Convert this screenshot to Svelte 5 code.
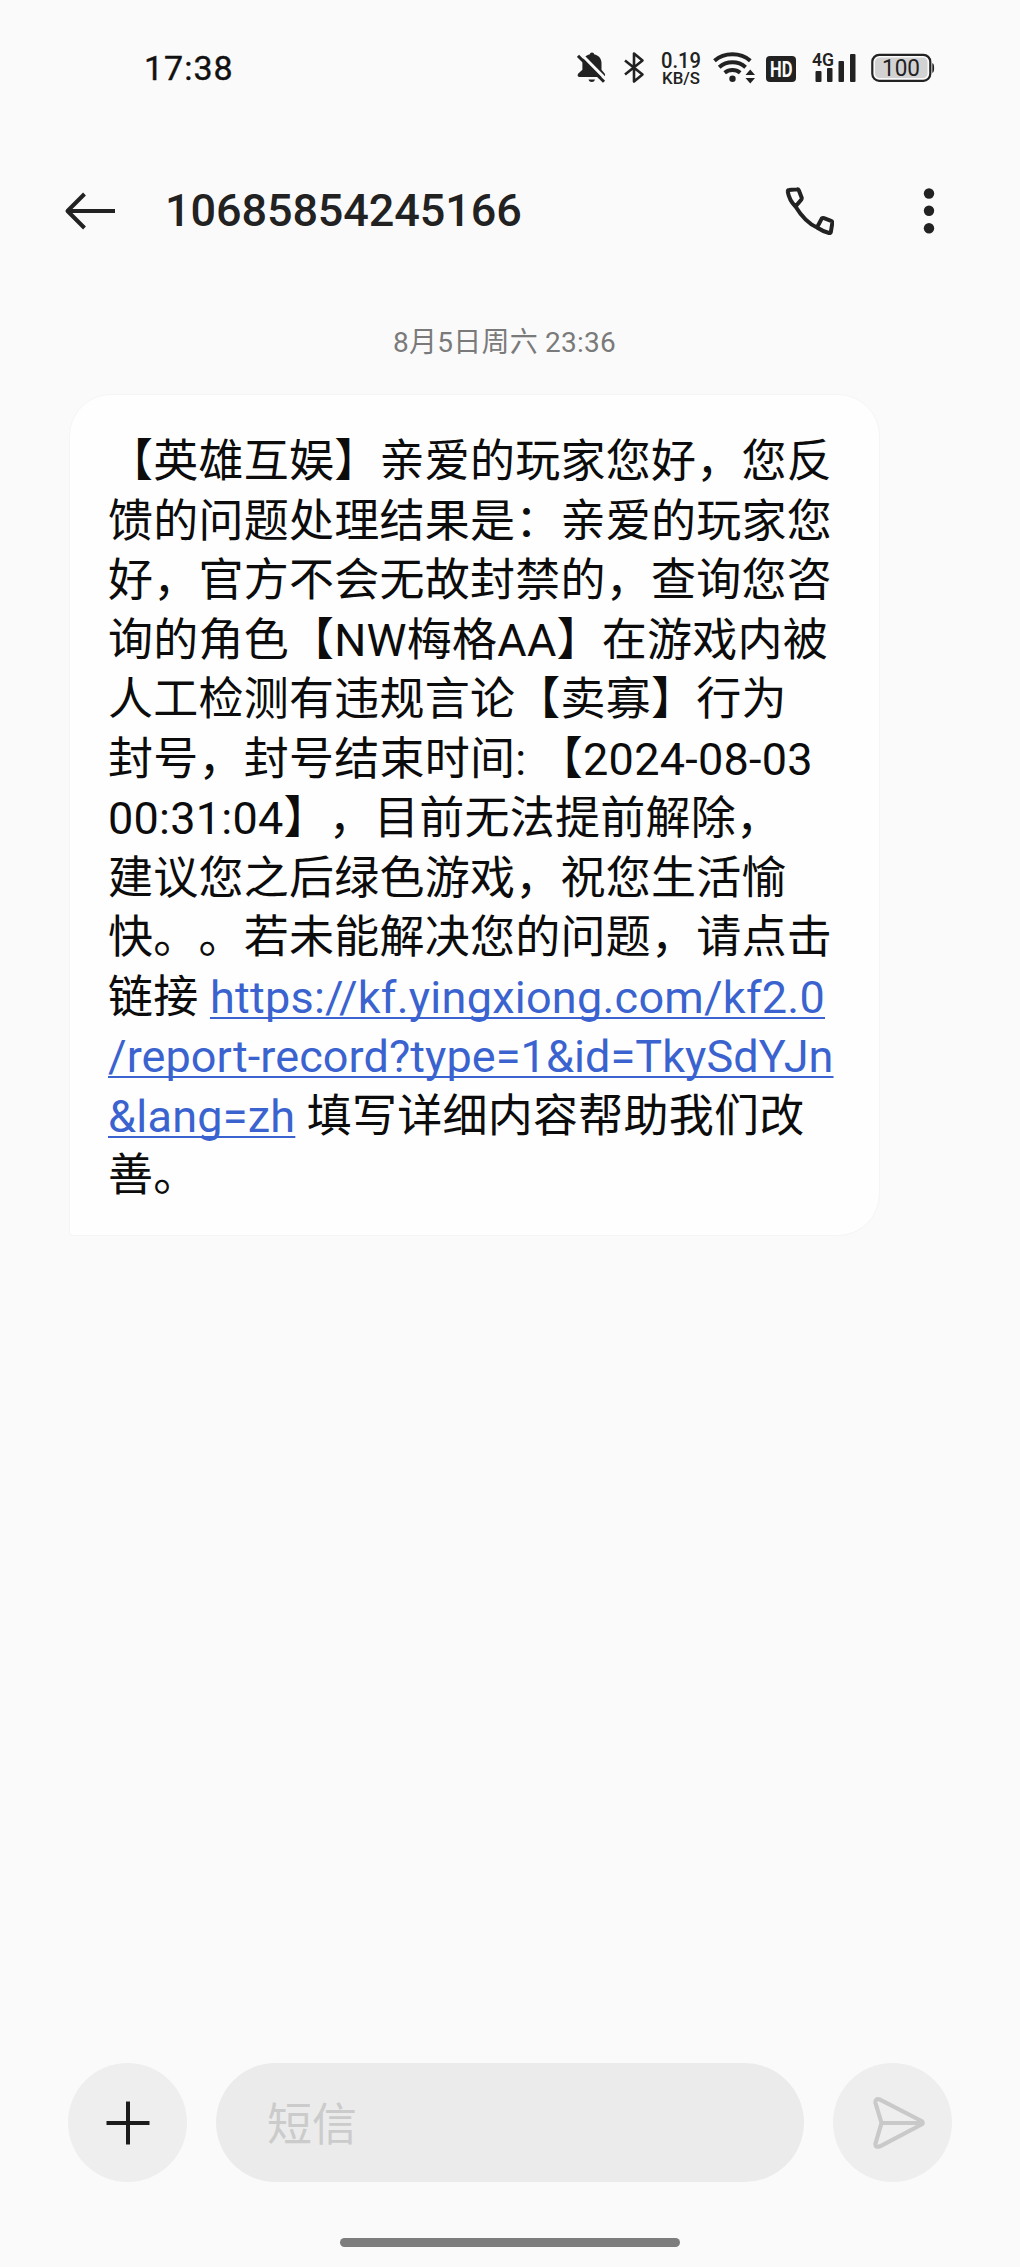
<script lang="ts">
  type Part = { text: string; link?: boolean; tight?: boolean };

  const sender = '10685854245166';
  const sentAt = '8月5日周六 23:36';

  // One entry per visual line, so the wrapping never depends on font metrics
  const lines: Part[][] = [
    [{ text: '【英雄互娱】亲爱的玩家您好，您反' }],
    [{ text: '馈的问题处理结果是：亲爱的玩家您' }],
    [{ text: '好，官方不会无故封禁的，查询您咨' }],
    [{ text: '询的角色【NW梅格AA】在游戏内被' }],
    [{ text: '人工检测有违规言论【卖寡】行为' }],
    [{ text: '封号，封号结束时间: 【2024-08-03' }],
    [{ text: '00:31:04】，目前无法提前解除，' }],
    [{ text: '建议您之后绿色游戏，祝您生活愉' }],
    [{ text: '快。。若未能解决您的问题，请点击' }],
    [{ text: '链接 ' }, { text: 'https://kf.yingxiong.com/kf2.0', link: true }],
    [{ text: '/report-record?type=1&id=TkySdYJn', link: true, tight: true }],
    [{ text: '&lang=zh', link: true }, { text: ' 填写详细内容帮助我们改' }],
    [{ text: '善。' }],
  ];
</script>

<div class="screen">
  <div class="status-bar">
    <span class="clock">17:38</span>
    <div class="status-icons">
      <svg class="bell" width="30" height="34" viewBox="0 0 30 34">
        <path d="M15 1.500c1.300 0 2 .8 2 1.800 4.600.9 7.500 4.400 7.500 9v6.500l3.300 4c.9 1.500.1 3.300-1.500 3.300H2.600c-1.800 0-2.600-1.800-1.500-3.300l4.300-4V12.300c0-4.600 3-8.100 7.600-9 0-1 .7-1.800 2-1.800z" />
        <path d="M11.500 28.500h6.500c-.4 1.700-1.600 2.500-3.200 2.500s-2.900-.8-3.300-2.500z" />
        <path d="M4 3L30 29.500" stroke="#fafafa" stroke-width="3" />
        <path d="M1 4.800L27 30.800" stroke="#222" stroke-width="3" />
      </svg>
      <svg class="bluetooth" width="22" height="34" viewBox="0 0 22 34">
        <path d="M1 9.500l17.500 14L10 30.500v-28l8.500 7L1 23.500" fill="none" stroke="#222" stroke-width="2.600" stroke-linejoin="round" />
      </svg>
      <svg class="speed" width="42" height="36" viewBox="0 0 42 36">
        <text class="rate" x="1" y="18" textLength="40" lengthAdjust="spacingAndGlyphs">0.19</text>
        <text class="unit" x="2" y="34" textLength="38" lengthAdjust="spacingAndGlyphs">KB/S</text>
      </svg>
      <svg class="wifi" width="44" height="34" viewBox="0 0 44 34">
        <g fill="none" stroke="#222" stroke-width="4">
          <path d="M1.500 9.800c9.800-8.600 26-8.600 35.800 0" />
          <path d="M6.200 16.300c7.500-6.600 18.900-6.600 26.400 0" />
          <path d="M11.700 21.800c4.500-3.700 11-3.700 15.500 0" />
        </g>
        <circle cx="19.500" cy="27.800" r="3.200" />
        <path d="M32.500 24h9.500l-4.750-5.500zM32.500 27h9.500l-4.750 5.500z" />
      </svg>
      <svg class="hd" width="30" height="26" viewBox="0 0 30 26">
        <rect width="30" height="26" rx="4" />
        <text x="4" y="20.500" textLength="22.500" lengthAdjust="spacingAndGlyphs">HD</text>
      </svg>
      <svg class="signal" width="45" height="34" viewBox="0 0 45 34">
        <text x="0" y="15" textLength="22" lengthAdjust="spacingAndGlyphs">4G</text>
        <rect x="3.500" y="20" width="6" height="11" rx="1" />
        <rect x="15" y="17" width="5.500" height="14" rx="1" />
        <rect x="26.500" y="10" width="5.500" height="21" rx="1" />
        <rect x="38" y="3" width="5.500" height="28" rx="1" />
      </svg>
      <svg class="battery" width="65" height="30" viewBox="0 0 65 30">
        <rect x="1.300" y="1.800" width="58" height="26" rx="7" fill="#fafafa" stroke="#222" stroke-width="2.200" />
        <rect x="4" y="4.500" width="52.500" height="20.600" rx="4.500" fill="#d2d2d2" />
        <path d="M61.300 10c1.500 1 1.800 2 1.800 5s-.3 4-1.800 5z" />
        <text x="11" y="23.300" textLength="38" lengthAdjust="spacingAndGlyphs">100</text>
      </svg>
    </div>
  </div>

  <header>
    <svg class="back" width="52" height="40" viewBox="0 0 52 40">
      <path d="M20.500 3L3.500 20l17 17M4 20h47" fill="none" stroke="#222" stroke-width="4" stroke-linejoin="round" />
    </svg>
    <h1>{sender}</h1>
    <svg class="call" width="50" height="50" viewBox="0 0 50 50">
      <path
        d="M3.800 5.500Q3.800 4.200 5.200 4.100L13 3.200Q14.300 3 14.800 4.200L17.600 11.500Q18 12.700 17.200 13.700L11.500 20.500M3.700 5.300C5 13 8 17 11.500 20.500C17 29.500 24 37.500 33 41.500Q39 45.500 45 47Q46.700 47.300 46.900 45.700L48.300 37Q48.500 35.400 47 34.800L40 32.200Q38.700 31.700 37.700 32.600L33 41.500"
        fill="none"
        stroke="#222"
        stroke-width="4"
        stroke-linejoin="round"
      />
    </svg>
    <svg class="more" width="12" height="46" viewBox="0 0 12 46">
      <circle cx="6" cy="5.500" r="5.200" />
      <circle cx="6" cy="22.800" r="5.200" />
      <circle cx="6" cy="40.200" r="5.200" />
    </svg>
  </header>

  <main>
    <time>{sentAt}</time>
    <div class="bubble">
      {#each lines as line}
        <div class="line">{#each line as part}{#if part.link}<span class="link" class:tight={part.tight}>{part.text}</span>{:else}<span>{part.text}</span>{/if}{/each}</div>
      {/each}
    </div>
  </main>

  <footer>
    <div class="round">
      <svg width="44" height="44" viewBox="0 0 44 44">
        <path d="M0.500 22h43M22 0.500v43" stroke="#1c1c1c" stroke-width="4" />
      </svg>
    </div>
    <div class="field">短信</div>
    <div class="round">
      <svg class="send" width="54" height="52" viewBox="0 0 54 52">
        <path
          d="M8 2.600L49.500 24Q52 26 49.500 27.500L8 49.300Q3 51 3.500 46.500L9.500 26L3.500 6Q3 1 8 2.600zM9.500 26H50"
          fill="none"
          stroke="#c9c9c9"
          stroke-width="4.200"
          stroke-linejoin="round"
        />
      </svg>
    </div>
  </footer>
  <div class="home-bar"></div>
</div>

<style>
  :global(body) {
    background: #fafafa;
  }
  .screen {
    box-sizing: border-box;
    width: 1020px;
    height: 2267px;
    display: flex;
    flex-direction: column;
    background: #fafafa;
    color: #222;
    font-family: Roboto, 'Noto Sans CJK SC', sans-serif;
    text-spacing-trim: space-all;
    overflow: hidden;
  }
  svg {
    display: block;
    flex: none;
    fill: #222;
  }
  .status-bar {
    display: flex;
    align-items: center;
    justify-content: space-between;
    height: 136px;
    padding: 0 84px 0 144px;
  }
  .clock {
    font-size: 34px;
    font-weight: 400;
    letter-spacing: 1px;
    color: #111;
    -webkit-text-stroke: 0.4px #111;
  }
  .status-icons {
    display: flex;
    align-items: center;
  }
  .bluetooth {
    margin-left: 17px;
  }
  .speed {
    margin-left: 14px;
  }
  .speed text {
    font-weight: 500;
  }
  .rate {
    font-size: 22.500px;
  }
  .unit {
    font-size: 16.500px;
  }
  .wifi {
    margin-left: 11px;
  }
  .hd {
    margin: 2px 0 0 9px;
  }
  .hd text {
    font-size: 22px;
    font-weight: 700;
    fill: #fafafa;
  }
  .signal {
    margin-left: 16px;
  }
  .signal text {
    font-size: 19px;
    font-weight: 600;
  }
  .battery {
    margin-left: 14px;
  }
  .battery text {
    font-size: 24px;
  }
  header {
    display: flex;
    align-items: center;
    height: 150px;
    padding: 0 85px 0 64px;
  }
  h1 {
    flex: 1;
    margin: 0 0 0 49px;
    font-size: 45px;
    font-weight: 500;
    line-height: 60px;
    letter-spacing: -0.100px;
  }
  .more {
    margin-left: 89px;
  }
  main {
    flex: 1;
    display: flex;
    flex-direction: column;
    align-items: flex-start;
    padding: 37px 69px 0;
  }
  time {
    align-self: center;
    margin-right: 11px;
    font-size: 28px;
    font-weight: 400;
    line-height: 40px;
    letter-spacing: 0.250px;
    color: #7a7a7a;
    white-space: pre;
  }
  .bubble {
    box-sizing: border-box;
    width: 811px;
    height: 842px;
    margin-top: 31px;
    padding: 37px 38px 0;
    background: #fefefe;
    border: 1px solid #f5f5f5;
    border-radius: 42px 42px 42px 4px;
    font-size: 45px;
    line-height: 59.500px;
    letter-spacing: 0.250px;
    color: #0c0c0c;
  }
  .line {
    height: 59.500px;
    white-space: pre;
  }
  .link {
    color: #3a63cf;
    text-decoration: underline;
    text-decoration-thickness: 2px;
    text-underline-offset: 4px;
    text-decoration-skip-ink: none;
  }
  .tight {
    letter-spacing: 0.080px;
  }
  footer {
    display: flex;
    align-items: center;
    gap: 29px;
    padding: 0 68px;
  }
  .round {
    display: flex;
    align-items: center;
    justify-content: center;
    width: 119px;
    height: 119px;
    border-radius: 50%;
    background: #eee;
  }
  .send {
    margin-left: 13px;
  }
  .field {
    flex: 1;
    height: 119px;
    padding-left: 51px;
    border-radius: 60px;
    background: #ebebeb;
    font-size: 45px;
    font-weight: 400;
    line-height: 125px;
    color: #cbcbcb;
  }
  .home-bar {
    width: 340px;
    height: 9px;
    margin: 56px auto 20px;
    border-radius: 5px;
    background: #7d7d7d;
  }
</style>
